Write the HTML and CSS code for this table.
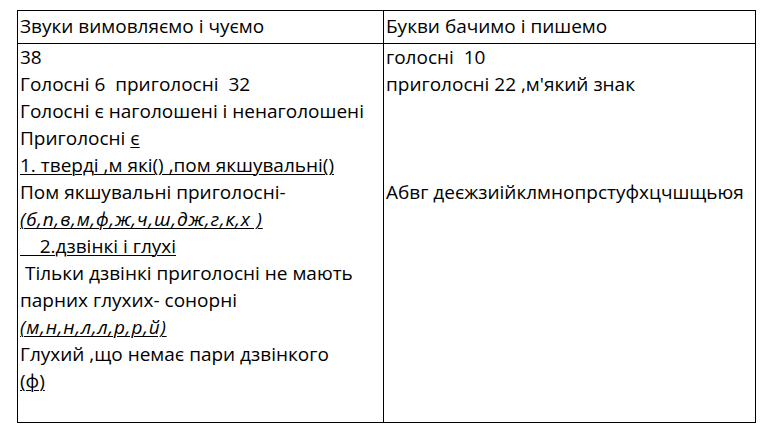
FILE: index.html
```html
<!DOCTYPE html>
<html lang="uk">
<head>
<meta charset="utf-8">
<link rel="stylesheet" href="styles.css">
</head>
<body>
<table class="sheet">
  <tr class="head">
    <td class="c1">Звуки вимовляємо і чуємо</td>
    <td class="c2">Букви бачимо і пишемо</td>
  </tr>
  <tr class="body">
    <td class="c1">
      <div class="ln">38</div>
      <div class="ln">Голосні 6  приголосні  32</div>
      <div class="ln">Голосні є наголошені і ненаголошені</div>
      <div class="ln">Приголосні <u>є</u></div>
      <div class="ln"><u>1. тверді ,м які() ,пом якшувальні()</u></div>
      <div class="ln">Пом якшувальні приголосні-</div>
      <div class="ln"><u><i>(б,п,в,м,ф,ж,ч,ш,дж,г,к,х )</i></u></div>
      <div class="ln"><u>    2.дзвінкі і глухі</u></div>
      <div class="ln"> Тільки дзвінкі приголосні не мають</div>
      <div class="ln">парних глухих- сонорні</div>
      <div class="ln"><u><i>(м,н,н,л,л,р,р,й)</i></u></div>
      <div class="ln">Глухий ,що немає пари дзвінкого</div>
      <div class="ln"><u>(ф)</u></div>
      <div class="ln"> </div>
    </td>
    <td class="c2">
      <div class="ln">голосні  10</div>
      <div class="ln">приголосні 22 ,м'який знак</div>
      <div class="ln"> </div>
      <div class="ln"> </div>
      <div class="ln"> </div>
      <div class="ln">Абвг деєжзиійклмнопрстуфхцчшщьюя</div>
    </td>
  </tr>
</table>
</body>
</html>
```

FILE: styles.css
```css
html, body {
  margin: 0;
  padding: 0;
  background: #fff;
}
body {
  padding: 10px 0 0 17px;
  font-family: "Open Sans", "Noto Sans", sans-serif;
  font-size: 19px;
  color: #000;
}
.sheet {
  border-collapse: collapse;
  table-layout: fixed;
  width: 739px;
}
.sheet td {
  border: 1px solid #000;
  padding: 0 0 0 2px;
  vertical-align: top;
  overflow: visible;
}
.c1 { width: 366px; }
.head td {
  height: 33px;
  box-sizing: border-box;
  padding-top: 0;
  line-height: 30px;
}
.ln {
  white-space: pre;
  line-height: 27px;
  height: 27px;
}
i {
  letter-spacing: 0.8px;
}
u {
  text-decoration-thickness: 1px;
  text-underline-offset: 2px;
}
```
